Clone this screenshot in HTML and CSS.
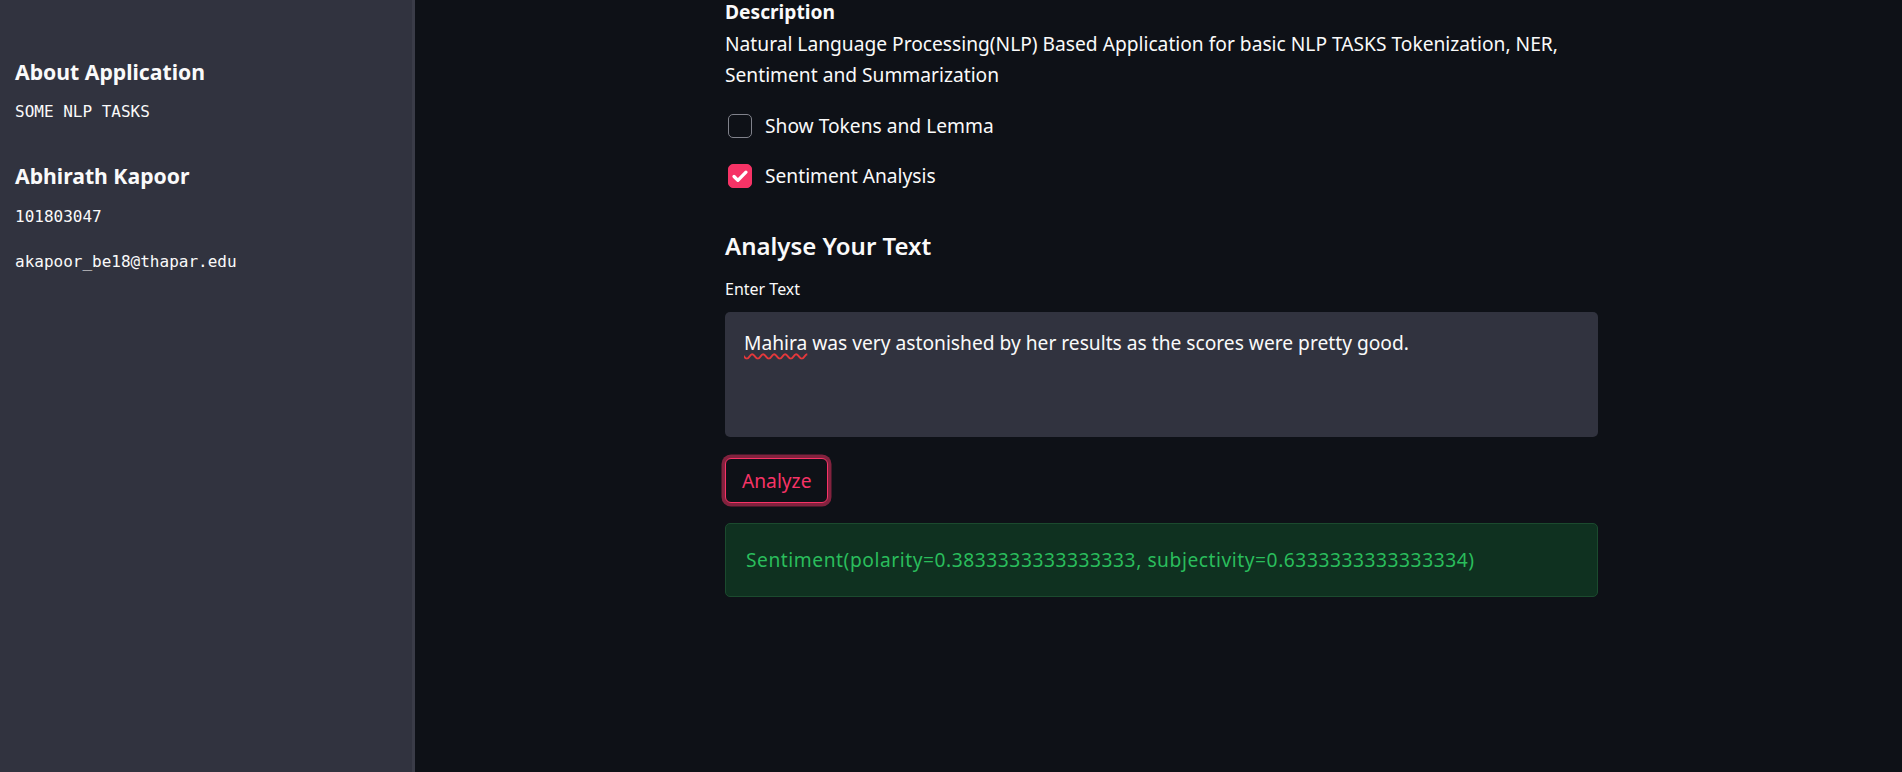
FILE: index.html
```html
<!DOCTYPE html>
<html lang="en">
<head>
<meta charset="utf-8">
<title>NLP App</title>
<link rel="stylesheet" href="styles.css">
</head>
<body>
<aside class="sidebar">
  <div class="side-title t1">About Application</div>
  <div class="side-mono m1">SOME NLP TASKS</div>
  <div class="side-title t2">Abhirath Kapoor</div>
  <div class="side-mono m2">101803047</div>
  <div class="side-mono m3">akapoor_be18@thapar.edu</div>
</aside>
<main class="main">
  <div class="block">
    <div class="desc">
      <div class="desc-title">Description</div>
      <div>Natural Language Processing(NLP) Based Application for basic NLP TASKS Tokenization, NER, Sentiment and Summarization</div>
    </div>
    <div class="checks">
      <label class="check">
        <span class="box"></span>
        <span class="check-label">Show Tokens and Lemma</span>
      </label>
      <label class="check">
        <span class="box checked"><svg viewBox="0 0 24 24" width="24" height="24"><path d="M5.5 12.5l4.2 4.2L18.5 7.8" fill="none" stroke="#fff" stroke-width="3.6" stroke-linecap="round" stroke-linejoin="round"/></svg></span>
        <span class="check-label">Sentiment Analysis</span>
      </label>
    </div>
    <h3 class="subheader">Analyse Your Text</h3>
    <div class="field-label">Enter Text</div>
    <div class="textarea"><span class="misspelled">Mahira</span> was very astonished by her results as the scores were pretty good.</div>
    <button class="btn">Analyze</button>
    <div class="success">Sentiment(polarity=0.3833333333333333, subjectivity=0.6333333333333334)</div>
  </div>
</main>
</body>
</html>
```

FILE: styles.css
```css
html, body {
  margin: 0;
  padding: 0;
  height: 100%;
}
body {
  display: flex;
  background: #0e1117;
  color: #fafafa;
  font-family: "Noto Sans", "Open Sans", sans-serif;
  overflow: hidden;
}
.sidebar {
  width: 415px;
  flex: 0 0 415px;
  background: #31333f;
  border-right: 3px solid #3a3c48;
  padding: 56px 15px 0;
  box-sizing: border-box;
}
.side-title {
  font-size: 21.2px;
  font-weight: 700;
  line-height: 32px;
}
.side-mono {
  font-family: "DejaVu Sans Mono", "Liberation Mono", monospace;
  font-size: 16px;
  line-height: 24px;
}
.m1 { margin-top: 12px; }
.t2 { margin-top: 36px; }
.m2 { margin-top: 13px; }
.m3 { margin-top: 21px; }

.main {
  flex: 1;
  display: flex;
  justify-content: center;
  padding-left: 6px;
}
.block {
  width: 873px;
  margin-top: -4px;
}
.desc {
  font-size: 19.2px;
  line-height: 31.5px;
}
.desc-title {
  font-weight: 700;
}
.checks {
  margin-top: 10px;
}
.check {
  display: flex;
  align-items: center;
  height: 50px;
  padding-left: 3px;
}
.box {
  width: 24px;
  height: 24px;
  box-sizing: border-box;
  border: 1.5px solid #80828b;
  border-radius: 5px;
  display: flex;
  align-items: center;
  justify-content: center;
}
.box.checked {
  background: #f63366;
  border-color: #f63366;
}
.box svg { display: block; }
.check-label {
  margin-left: 13px;
  font-size: 19.2px;
  line-height: 30px;
}
.subheader {
  margin: 27px 0 0;
  font-size: 24px;
  font-weight: 600;
  line-height: 36px;
}
.field-label {
  margin-top: 13px;
  font-size: 16px;
  line-height: 24px;
}
.textarea {
  margin-top: 11px;
  height: 125px;
  box-sizing: border-box;
  background: #31333f;
  border-radius: 5px;
  padding: 16px 19px 12px;
  font-size: 19.2px;
  line-height: 30.7px;
}
.misspelled {
  text-decoration: underline wavy #e5383b;
  text-decoration-thickness: 1.5px;
  text-underline-offset: 3px;
}
.btn {
  display: flex;
  align-items: center;
  margin-top: 21px;
  height: 45px;
  padding: 0 16px;
  background: #0e1117;
  color: #f63366;
  border: 1px solid #f63366;
  border-radius: 6px;
  box-shadow: 0 0 0 3.5px rgba(246, 51, 102, 0.5);
  font-family: inherit;
  font-size: 19.2px;
}
.success {
  margin-top: 20px;
  height: 74px;
  box-sizing: border-box;
  display: flex;
  align-items: center;
  padding: 0 20px;
  background: #0f3120;
  border: 1px solid #1b4a2e;
  border-radius: 5px;
  color: #2abd5c;
  font-size: 19.2px;
  letter-spacing: 0.55px;
}
```
